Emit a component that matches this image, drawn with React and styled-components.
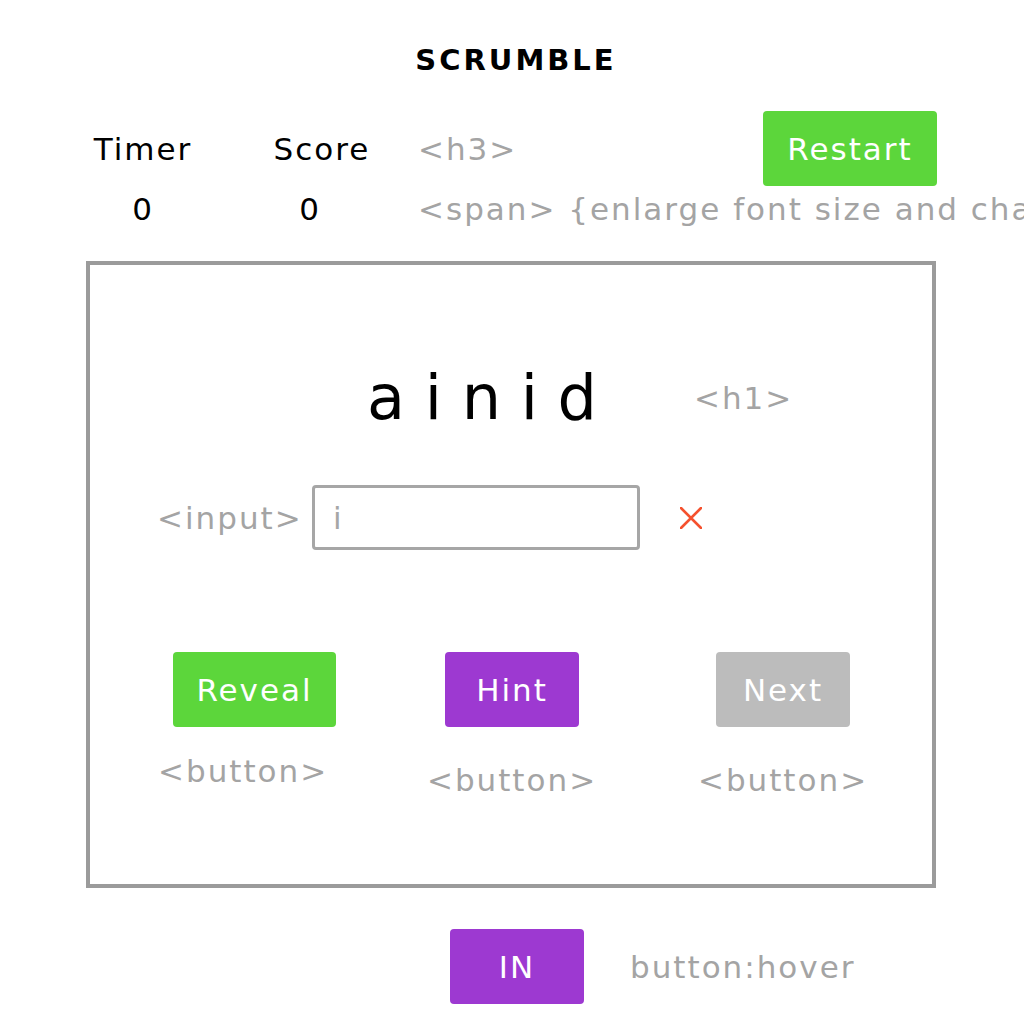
import React from "react";
import styled, { createGlobalStyle } from "styled-components";

const GlobalStyle = createGlobalStyle`
  html, body {
    margin: 0;
    padding: 0;
    overflow: hidden;
    background: #ffffff;
  }
  body {
    font-family: "DejaVu Sans", "Liberation Sans", sans-serif;
    color: #000;
  }
`;

const Page = styled.div`
  width: 1024px;
  height: 1024px;
  display: flex;
  flex-direction: column;
`;

const Title = styled.h2`
  margin: 0;
  padding-top: 40px;
  padding-left: 8px;
  height: 40px;
  line-height: 40px;
  text-align: center;
  font-size: 29px;
  font-weight: 700;
  letter-spacing: 3px;
`;

const Stats = styled.div`
  margin-top: 31px;
  padding-left: 80px;
  display: grid;
  grid-template-columns: 126px 178px 379px 174px;
  grid-template-rows: 75px 46px;
  align-items: center;
  font-size: 31px;
  letter-spacing: 2px;
  white-space: nowrap;
`;

const StatCell = styled.div`
  text-align: center;
  padding-left: ${(p) => p.$pl || 0}px;
  padding-right: ${(p) => p.$pr || 0}px;
  line-height: 40px;
`;

const Note = styled.div`
  color: #a4a4a4;
  font-size: 31px;
  letter-spacing: 2px;
  line-height: 40px;
  white-space: nowrap;
  padding-left: ${(p) => p.$pl || 0}px;
`;

const Button = styled.button`
  width: ${(p) => p.$w || 134}px;
  height: 75px;
  padding: 0;
  border: none;
  border-radius: 4px;
  background: ${(p) => p.$bg};
  color: #ffffff;
  font-family: inherit;
  font-size: 31px;
  letter-spacing: 2px;
  cursor: pointer;
`;

const Board = styled.div`
  margin-top: 29px;
  margin-left: 86px;
  width: 850px;
  height: 627px;
  box-sizing: border-box;
  border: 4px solid #9b9b9b;
  display: flex;
  flex-direction: column;
`;

const WordRow = styled.div`
  margin-top: 93px;
  padding-left: 277px;
  display: grid;
  grid-template-columns: 327px auto;
  align-items: center;
  height: 80px;
`;

const Word = styled.h1`
  margin: 0;
  font-size: 62px;
  font-weight: 400;
  line-height: 80px;
  white-space: pre;
`;

const InputRow = styled.div`
  margin-top: 47px;
  padding-left: 67px;
  display: grid;
  grid-template-columns: 155px 328px auto;
  align-items: center;
  height: 65px;
`;

const Field = styled.input`
  width: 328px;
  height: 65px;
  box-sizing: border-box;
  border: 3px solid #a6a6a6;
  border-radius: 4px;
  padding: 0 0 0 18px;
  font-family: inherit;
  font-size: 31px;
  color: #a6a6a6;
  outline: none;
`;

const Clear = styled.span`
  margin-left: 40px;
  display: flex;
  align-items: center;
`;

const ButtonRow = styled.div`
  margin-top: 102px;
  padding-left: 83px;
  display: grid;
  grid-template-columns: 256px 271px 166px;
  align-items: start;
`;

const ButtonGroup = styled.div`
  width: 166px;
  display: flex;
  flex-direction: column;
  align-items: ${(p) => (p.$start ? "flex-start" : "center")};
`;

const ButtonLabel = styled(Note)`
  margin-top: ${(p) => p.$mt}px;
  margin-left: ${(p) => p.$ml || 0}px;
`;

const Footer = styled.div`
  margin-top: 41px;
  padding-left: 450px;
  display: flex;
  align-items: center;
  gap: 46px;
`;

const GREEN = "#5cd63b";
const PURPLE = "#9d39d1";
const GREY = "#bcbcbc";

export default function App() {
  return (
    <Page>
      <GlobalStyle />
      <Title>SCRUMBLE</Title>

      <Stats>
        <StatCell>Timer</StatCell>
        <StatCell $pl={54}>Score</StatCell>
        <Note $pl={34}>&lt;h3&gt;</Note>
        <Button $bg={GREEN} $w={174}>Restart</Button>

        <StatCell>0</StatCell>
        <StatCell $pl={54} $pr={24}>0</StatCell>
        <Note $pl={34}>&lt;span&gt; {"{enlarge font size and change color}"}</Note>
      </Stats>

      <Board>
        <WordRow>
          <Word>a i n i d</Word>
          <Note>&lt;h1&gt;</Note>
        </WordRow>

        <InputRow>
          <Note>&lt;input&gt;</Note>
          <Field value="i" readOnly />
          <Clear>
            <svg width="22" height="22" viewBox="0 0 22 22">
              <path d="M1 1 L21 21 M21 1 L1 21" stroke="#f5512e" strokeWidth="2.6" strokeLinecap="round" />
            </svg>
          </Clear>
        </InputRow>

        <ButtonRow>
          <ButtonGroup $start>
            <Button $bg={GREEN} $w={163}>Reveal</Button>
            <ButtonLabel $mt={24} $ml={-15}>&lt;button&gt;</ButtonLabel>
          </ButtonGroup>
          <ButtonGroup>
            <Button $bg={PURPLE}>Hint</Button>
            <ButtonLabel $mt={33}>&lt;button&gt;</ButtonLabel>
          </ButtonGroup>
          <ButtonGroup>
            <Button $bg={GREY}>Next</Button>
            <ButtonLabel $mt={33}>&lt;button&gt;</ButtonLabel>
          </ButtonGroup>
        </ButtonRow>
      </Board>

      <Footer>
        <Button $bg={PURPLE}>IN</Button>
        <Note>button:hover</Note>
      </Footer>
    </Page>
  );
}
